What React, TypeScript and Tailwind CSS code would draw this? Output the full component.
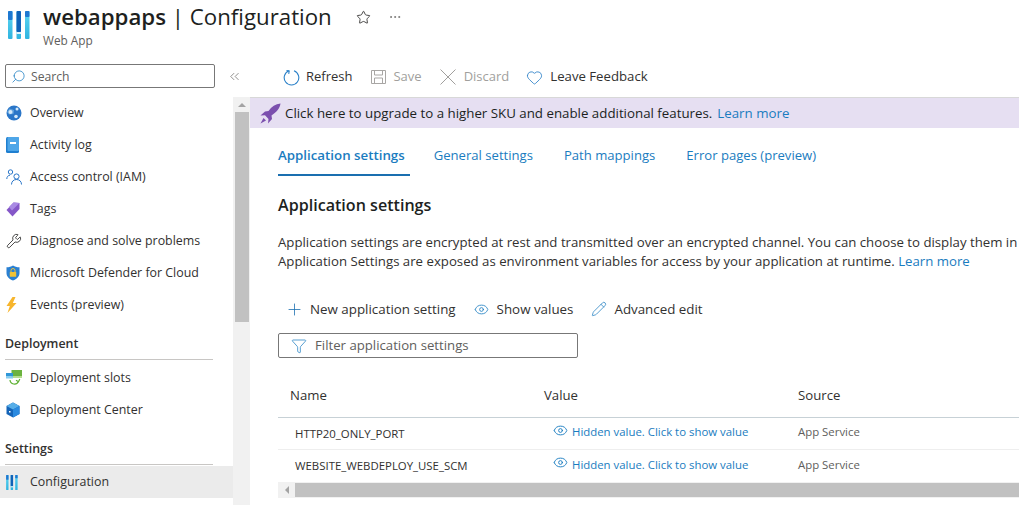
import { Search, ChevronsLeft, Star, Ellipsis, Plus, Eye, Pencil, Filter, Wrench, Heart } from "lucide-react";
import type { ReactNode } from "react";

function ConfigIcon({ w, h, id }: { w: number; h: number; id: string }) {
  return (
    <svg width={w} height={h} viewBox="0 0 22 28">
      <defs>
        <linearGradient id={id} x1="0" y1="0" x2="0" y2="1">
          <stop offset="0" stopColor="#5ed6f2" />
          <stop offset="1" stopColor="#2fb4e0" />
        </linearGradient>
      </defs>
      <rect x="0" y="0" width="4.500" height="28" rx="1" fill={`url(#${id})`} />
      <rect x="8.500" y="0" width="4.500" height="28" rx="1" fill={`url(#${id})`} />
      <rect x="17" y="0" width="4.500" height="28" rx="1" fill={`url(#${id})`} />
      <rect x="0" y="0" width="4.500" height="9" rx="1" fill="#1f78d1" />
      <rect x="8.500" y="0" width="4.500" height="21" rx="1" fill="#0f62b8" />
      <rect x="17" y="0" width="4.500" height="6" rx="1" fill="#1f78d1" />
      <rect x="8.500" y="21" width="4.500" height="2" fill="#dff5fc" />
    </svg>
  );
}

const OverviewIcon = (
  <svg width="16" height="16" viewBox="0 0 16 16">
    <circle cx="8" cy="8" r="7.500" fill="#2a76c8" />
    <path d="M3.500 3.500 8 5l-.5 4L3 9.500 1 7Z" fill="#8cc4ee" opacity=".55" />
    <circle cx="4.500" cy="7" r="2" fill="#d4e9f9" />
    <circle cx="11" cy="4" r="1.500" fill="#d4e9f9" />
    <circle cx="10" cy="11.500" r="1.800" fill="#d4e9f9" />
  </svg>
);

const LogIcon = (
  <svg width="13" height="16" viewBox="0 0 13 16">
    <rect x="0" y="0" width="13" height="16" rx="1.500" fill="#1f7fd0" />
    <rect x="1.500" y="0" width="11.500" height="14" rx="1" fill="#4ea6e8" />
    <rect x="4" y="5" width="6" height="2" fill="#fff" />
  </svg>
);

const AccessIcon = (
  <svg width="16" height="16" viewBox="0 0 16 16" fill="none" stroke="#2a76c8" strokeWidth="1">
    <circle cx="4.500" cy="3" r="2.200" />
    <circle cx="10.500" cy="7.500" r="2.600" />
    <path d="M.8 10c0-2.200 1.200-3.600 3.200-3.800M5.500 15.500c0-3 2-5 5-5s5 2 5 5" />
  </svg>
);

const TagIcon = (
  <svg width="14" height="15" viewBox="0 0 14 15">
    <path d="M7.500 .5 13.500 1 13.500 7 6.500 14.500 .5 8Z" fill="#8557c8" />
    <path d="M7.500 .5 13.500 1 6 8.500 3 5Z" fill="#a98ae4" />
  </svg>
);

const ShieldIcon = (
  <svg width="14" height="16" viewBox="0 0 14 16">
    <path d="M7 .5c1.800 1.200 3.800 1.700 6.500 1.800V8c0 3.600-2.700 6-6.500 7.500C3.200 14 .5 11.600.5 8V2.300C3.200 2.200 5.200 1.700 7 .5Z" fill="#2a80d2" />
    <rect x="3.800" y="7" width="6.400" height="4.800" rx=".5" fill="#f2c335" />
    <path d="M5 7V5.500a2 2 0 0 1 4 0V7" fill="none" stroke="#f2c335" strokeWidth="1" />
  </svg>
);

const BoltIcon = (
  <svg width="11" height="16" viewBox="0 0 11 16">
    <path d="M6.500 0 .5 9h3.300L1.500 16 10.500 6H6.800L9.500 0Z" fill="#f7b52c" />
  </svg>
);

const SlotsIcon = (
  <svg width="16" height="16" viewBox="0 0 16 16">
    <rect x="5.500" y="0" width="10.500" height="6" fill="#6cb33f" />
    <rect x="5.500" y="6" width="10.500" height="2" fill="#b5dd90" />
    <rect x="0" y="3" width="7" height="3.500" fill="#2f97d8" />
    <rect x="0" y="6.500" width="7" height="2" fill="#86cdf0" />
    <path d="M4 10a4.400 4.400 0 0 0 8.400 1.500M13.800 9l-1.300 2.700-2.500-1.500" fill="none" stroke="#5cb030" strokeWidth="1.200" />
  </svg>
);

const BoxIcon = (
  <svg width="14" height="16" viewBox="0 0 14 16">
    <path d="M7 .5 13.500 4v8L7 15.500.5 12V4Z" fill="#1464b8" />
    <path d="M7 .5 13.500 4 7 7.500.5 4Z" fill="#57aee8" />
    <path d="M7 7.500v8l6.500-3.500V4Z" fill="#2a8ae0" />
    <rect x="3" y="9" width="1.500" height="1.500" fill="#fff" />
  </svg>
);

const RocketIcon = (
  <svg width="21" height="21" viewBox="0 0 21 21">
    <path d="M20.500.5c-5 .5-9 3-12 7.500L5 8.500.5 12.500 5 12.200 8.500 16 8 20.500l4-4.500-.5-3.500C16 9.500 20 5.500 20.500.5Z" fill="#7b4fae" />
    <path d="M3.500 15 .5 20.500 6 17.500Z" fill="#7b4fae" />
  </svg>
);

const RefreshIcon = (
  <svg width="17" height="17" viewBox="0 0 17 17" fill="none" stroke="#2a80c8" strokeWidth="1.100">
    <path d="M6 1.800A7.300 7.300 0 1 0 11 1.800" />
    <path d="M3.500 1.500 6.200 2 5.700 4.800" />
  </svg>
);

const SaveIcon = (
  <svg width="15" height="14" viewBox="0 0 15 14" fill="none" stroke="#a8a6a4" strokeWidth="1">
    <path d="M.5.500h14v13H.5Z" />
    <path d="M3.500.500v4.500h8V.500M3.500 13.500V8h8v5.500" />
  </svg>
);

const DiscardIcon = (
  <svg width="16" height="16" viewBox="0 0 16 16" fill="none" stroke="#a19f9d" strokeWidth="1">
    <path d="M.5.500l15 15M15.500.500l-15 15" />
  </svg>
);

function NavItem({ icon, label, active }: { icon: ReactNode; label: string; active?: boolean }) {
  return (
    <div className={`flex items-center h-8 pl-[6px] text-[12.400px] text-[#323130] ${active ? "bg-[#ebebeb]" : ""}`}>
      <span className="w-[24px] shrink-0 flex items-center">{icon}</span>
      <span className="mt-[1px]">{label}</span>
    </div>
  );
}

function SectionHead({ label }: { label: string }) {
  return (
    <div className="ml-[5px] mr-5 border-b border-[#c8c6c4] text-[12.400px] font-semibold text-[#323130] h-6 leading-[15px]">
      {label}
    </div>
  );
}

function HiddenValue() {
  return (
    <span className="w-[254px] pl-[9px] flex items-center gap-[4px] text-[11.400px] text-[#1a7cc0] -mt-[3px]">
      <Eye size={15} strokeWidth={1.500} className="text-[#1a7cc0] -mt-[3px]" />
      Hidden value. Click to show value
    </span>
  );
}

export default function App() {
  return (
    <div className="w-[1019px] h-[505px] overflow-hidden bg-white font-['Open_Sans','Liberation_Sans',sans-serif] text-[#323130]">
      <header className="h-[60px] flex pl-2">
        <div className="mt-[11px]">
          <ConfigIcon w={22} h={28} id="cfgBig" />
        </div>
        <div className="ml-[13px]">
          <div className="flex items-center h-[35px]">
            <h1 className="text-[22.250px] leading-none text-[#201f1e] whitespace-nowrap">
              <span className="font-semibold">webappaps</span> | Configuration
            </h1>
            <Star size={15} strokeWidth={1.400} className="ml-[24px] -mt-[1px] text-[#323130]" />
            <Ellipsis size={14} strokeWidth={1.200} className="ml-[17px] -mt-[2px] text-[#605e5c]" />
          </div>
          <div className="text-[11.800px] leading-none text-[#605e5c]">Web App</div>
        </div>
      </header>

      <div className="flex">
        <aside className="w-[250px] shrink-0">
          <div className="h-[37px] pt-1 pl-[5px] flex items-start">
            <div className="w-[210px] h-6 border border-[#777] rounded-[2px] flex items-center pl-[5px] gap-[5px] text-[12.200px] text-[#605e5c]">
              <Search size={15} strokeWidth={1.200} className="text-[#1a7cc0] -scale-x-100" />
              <span className="mt-[2px]">Search</span>
            </div>
            <ChevronsLeft size={15} strokeWidth={1.100} className="ml-[12px] mt-[5px] text-[#605e5c]" />
          </div>
          <div className="flex h-[408px]">
            <nav className="w-[233px] whitespace-nowrap">
              <NavItem icon={OverviewIcon} label="Overview" />
              <NavItem icon={LogIcon} label="Activity log" />
              <NavItem icon={AccessIcon} label="Access control (IAM)" />
              <NavItem icon={TagIcon} label="Tags" />
              <NavItem icon={<Wrench size={16} strokeWidth={1.200} className="text-[#201f1e]" />} label="Diagnose and solve problems" />
              <NavItem icon={ShieldIcon} label="Microsoft Defender for Cloud" />
              <NavItem icon={BoltIcon} label="Events (preview)" />
              <div className="h-[15px]" />
              <SectionHead label="Deployment" />
              <div className="h-[2px]" />
              <NavItem icon={SlotsIcon} label="Deployment slots" />
              <NavItem icon={BoxIcon} label="Deployment Center" />
              <div className="h-[15px]" />
              <SectionHead label="Settings" />
              <div className="h-[1px]" />
              <NavItem icon={<ConfigIcon w={12} h={15} id="cfgSmall" />} label="Configuration" active />
            </nav>
            <div className="w-[17px] bg-[#f1f1f1] flex flex-col items-center">
              <div className="h-[15px] flex items-center justify-center">
                <span className="border-x-[4px] border-x-transparent border-b-[4px] border-b-[#a3a3a3]" />
              </div>
              <div className="w-[14px] h-[210px] bg-[#c1c1c1]" />
            </div>
          </div>
        </aside>

        <main className="flex-1 min-w-0 overflow-hidden whitespace-nowrap">
          <div className="h-[37px] flex items-start pt-[7px] pl-[33px] text-[13px]">
            <span className="flex items-center gap-[6px] h-[20px]">
              {RefreshIcon}
              Refresh
            </span>
            <span className="flex items-center gap-[7px] h-[20px] ml-[19px] text-[#a19f9d]">
              {SaveIcon}
              Save
            </span>
            <span className="flex items-center gap-2 h-[20px] ml-[18px] text-[#a19f9d]">
              {DiscardIcon}
              Discard
            </span>
            <span className="flex items-center gap-[7px] h-[20px] ml-[17px] text-[13.200px]">
              <Heart size={17} strokeWidth={1.200} className="text-[#2a80c8]" />
              Leave Feedback
            </span>
          </div>

          <div className="h-[31px] bg-[#e6dff2] flex items-center pl-[10px] pt-[2px] text-[13.300px] text-[#201f1e] border-t border-[#d8d8d8]">
            <span className="w-[25px] flex -mt-[2px]">{RocketIcon}</span>
            Click here to upgrade to a higher SKU and enable additional features.
            <span className="ml-[5px] text-[#1a7cc0]">Learn more</span>
          </div>

          <div className="pl-7">
            <div className="flex h-[48px] text-[13.100px] text-[#1a7cc0] items-start">
              <span className="h-[48px] border-b-2 border-[#1a6fb0] font-semibold text-[13.300px] pt-[18px] leading-[18px] pr-[5px]">Application settings</span>
              <span className="pt-[18px] leading-[18px] ml-6">General settings</span>
              <span className="pt-[18px] leading-[18px] ml-[31px]">Path mappings</span>
              <span className="pt-[18px] leading-[18px] ml-[31px]">Error pages (preview)</span>
            </div>

            <h2 className="text-[16.100px] font-semibold leading-5 mt-[19px] text-[#201f1e]">Application settings</h2>

            <p className="mt-[18px] text-[13.230px] leading-[19px] text-[#323130]">
              Application settings are encrypted at rest and transmitted over an encrypted channel. You can choose to display them in
              <br />
              Application Settings are exposed as environment variables for access by your application at runtime. <span className="text-[#1a7cc0]">Learn more</span>
            </p>

            <div className="flex items-center h-5 mt-[28px] text-[13.350px] text-[#323130]">
              <span className="flex items-center gap-[6px] ml-[7px]">
                <Plus size={19} strokeWidth={1} className="text-[#1a6fb0]" />
                New application setting
              </span>
              <span className="flex items-center gap-2 ml-[18px]">
                <Eye size={15} strokeWidth={1.300} className="text-[#1a7cc0]" />
                Show values
              </span>
              <span className="flex items-center gap-[7px] ml-[18px]">
                <Pencil size={16} strokeWidth={1.100} className="text-[#1a7cc0]" />
                Advanced edit
              </span>
            </div>

            <div className="mt-[14px] w-[300px] h-[25px] border border-[#777] rounded-[2px] flex items-center pl-3 gap-2 text-[13.200px] text-[#605e5c]">
              <Filter size={16} strokeWidth={1.100} className="text-[#1a7cc0]" />
              Filter application settings
            </div>

            <div className="mt-[22px] flex items-center h-[38px] pl-3 border-b border-[#c7d1d6] text-[13.200px] font-medium pb-[6px]">
              <span className="w-[254px]">Name</span>
              <span className="w-[254px]">Value</span>
              <span>Source</span>
            </div>
            <div className="flex items-center h-[32px] border-b border-[#eeeeee] pl-[17px] text-[11.400px]">
              <span className="w-[249px]">HTTP20_ONLY_PORT</span>
              <HiddenValue />
              <span className="text-[#605e5c] -mt-[3px]">App Service</span>
            </div>
            <div className="flex items-center h-[32px] pl-[17px] text-[11.400px]">
              <span className="w-[249px]">WEBSITE_WEBDEPLOY_USE_SCM</span>
              <HiddenValue />
              <span className="text-[#605e5c] -mt-[3px]">App Service</span>
            </div>
            <div className="h-4 bg-[#f1f1f1] flex items-center">
              <div className="w-[17px] flex justify-center">
                <span className="border-y-[4px] border-y-transparent border-r-[4px] border-r-[#a3a3a3]" />
              </div>
              <div className="flex-1 h-[14px] bg-[#c1c1c1]" />
            </div>
          </div>
        </main>
      </div>
    </div>
  );
}
